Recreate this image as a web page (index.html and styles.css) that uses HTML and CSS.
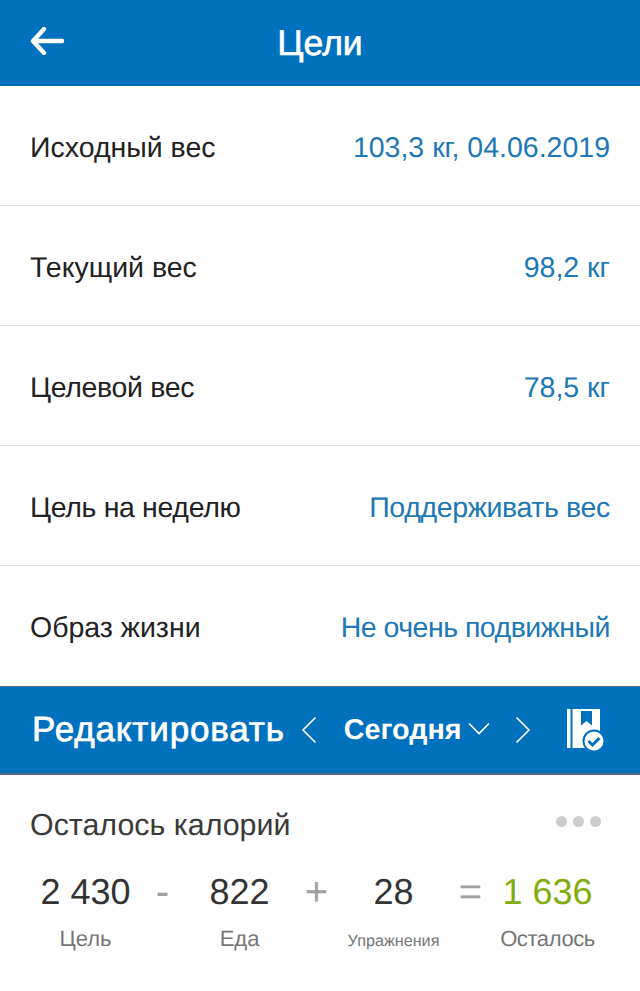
FILE: index.html
```html
<!DOCTYPE html>
<html lang="ru">
<head>
<meta charset="utf-8">
<title>Цели</title>
<link rel="stylesheet" href="styles.css">
</head>
<body>
<header class="topbar">
  <svg class="back" width="34" height="28" viewBox="0 0 34 28" aria-hidden="true"><path d="M14 2 3 14l11 12M4 14h28" fill="none" stroke="#fff" stroke-width="4.4" stroke-linecap="round" stroke-linejoin="round"/></svg>
  <h1 class="title">Цели</h1>
</header>
<main>
  <ul class="goals">
    <li class="goal"><span class="goal-name">Исходный вес</span><span class="goal-value">103,3 кг, 04.06.2019</span></li>
    <li class="goal"><span class="goal-name">Текущий вес</span><span class="goal-value">98,2 кг</span></li>
    <li class="goal"><span class="goal-name tight">Целевой вес</span><span class="goal-value">78,5 кг</span></li>
    <li class="goal"><span class="goal-name tight">Цель на неделю</span><span class="goal-value tight">Поддерживать вес</span></li>
    <li class="goal"><span class="goal-name">Образ жизни</span><span class="goal-value tighter">Не очень подвижный</span></li>
  </ul>
  <div class="editbar">
    <span class="edit">Редактировать</span>
    <svg class="chev chev-left" width="16" height="28" viewBox="0 0 16 28" aria-hidden="true"><path d="M14.5 1.5 2 14l12.5 12.5" fill="none" stroke="#fff" stroke-width="1.6"/></svg>
    <span class="today">Сегодня</span>
    <svg class="chev-down" width="22" height="13" viewBox="0 0 22 13" aria-hidden="true"><path d="M1 1.5 11 11.5 21 1.500" fill="none" stroke="#fff" stroke-width="1.6"/></svg>
    <svg class="chev chev-right" width="16" height="28" viewBox="0 0 16 28" aria-hidden="true"><path d="M1.500 1.500 14 14 1.500 26.500" fill="none" stroke="#fff" stroke-width="1.600"/></svg>
    <svg class="diary" width="38" height="44" viewBox="0 0 38 44" aria-hidden="true">
      <path d="M0 0h3.500v39H0z" fill="#fff"/>
      <path d="M5.500 0H33v39H5.500z" fill="#fff"/>
      <path d="M14 2h11v14.500l-5.500-4.500-5.500 4.500z" fill="#0071bc"/>
      <circle cx="27" cy="32" r="10.500" fill="#fff" stroke="#0071bc" stroke-width="2"/>
      <path d="M21.500 32l4 4 7-7" fill="none" stroke="#0071bc" stroke-width="3"/>
    </svg>
  </div>
  <section class="summary">
    <div class="summary-head">
      <h2 class="summary-title">Осталось калорий</h2>
      <div class="dots"><i></i><i></i><i></i></div>
    </div>
    <div class="calc">
      <span class="num">2 430</span><span class="op">-</span><span class="num">822</span><span class="op">+</span><span class="num">28</span><span class="op">=</span><span class="num num-left">1 636</span>
      <span class="lbl">Цель</span><span></span><span class="lbl">Еда</span><span></span><span class="lbl lbl-small">Упражнения</span><span></span><span class="lbl lbl-tight">Осталось</span>
    </div>
  </section>
</main>
</body>
</html>
```
FILE: styles.css
```css
* { box-sizing: border-box; }
html, body { margin: 0; padding: 0; }
body { width: 640px; height: 991px; overflow: hidden; background: #fff; font-family: "Liberation Sans", Arial, sans-serif; text-rendering: geometricPrecision; }
.topbar { height: 86px; background: #0071bc; display: flex; align-items: center; justify-content: center; position: relative; }
.back { position: absolute; left: 30px; top: 27px; }
.title { margin: 0; color: #fff; font-size: 35.500px; font-weight: 400; -webkit-text-stroke: 0.6px #fff; }
.goals { list-style: none; margin: 0; padding: 0; }
.goal { height: 120px; display: flex; align-items: center; justify-content: space-between; padding: 6px 30px 0; border-bottom: 1px solid #dedede; font-size: 28.500px; }
.goal:last-child { border-bottom-color: transparent; }
.goal-name { color: #222; }
.goal-value { color: #2078b4; }
.tight { letter-spacing: -0.350px; }
.tighter { letter-spacing: -0.500px; }
.editbar { height: 89px; background: #0071bc; border-top: 1px solid #5a6d7e; border-bottom: 2px solid #56697a; display: flex; align-items: center; color: #fff; padding-left: 32px; }
.edit { font-size: 35px; letter-spacing: 0.850px; -webkit-text-stroke: 0.7px #fff; }
.chev-left { margin-left: 16px; }
.today { margin-left: 27px; font-size: 28.700px; font-weight: 700; }
.chev-down { margin: 0 0 4px 6px; }
.chev-right { margin-left: 25px; }
.diary { margin: 2px 0 0 36px; }
.summary { padding: 33px 30px 0; background: #fefefe; height: 216px; }
.summary-head { display: flex; justify-content: space-between; align-items: flex-start; }
.summary-title { margin: 0; font-size: 30.400px; font-weight: 400; color: #3a3a3a; }
.dots { display: flex; gap: 6px; margin: 8px 9px 0 0; }
.dots i { width: 11px; height: 11px; border-radius: 50%; background: #cdcdcd; }
.calc { margin: 28px 0 0 17px; display: grid; grid-template-columns: repeat(7, 77px); justify-items: center; row-gap: 13px; }
.num { font-size: 36px; line-height: 42px; color: #333; white-space: nowrap; }
.num-left { color: #84ac10; }
.op { font-size: 40px; line-height: 42px; color: #a0a0a0; }
.lbl { font-size: 22px; color: #777; white-space: nowrap; }
.lbl-small { font-size: 16.200px; line-height: 31px; }
.lbl-tight { letter-spacing: -0.400px; }
```
